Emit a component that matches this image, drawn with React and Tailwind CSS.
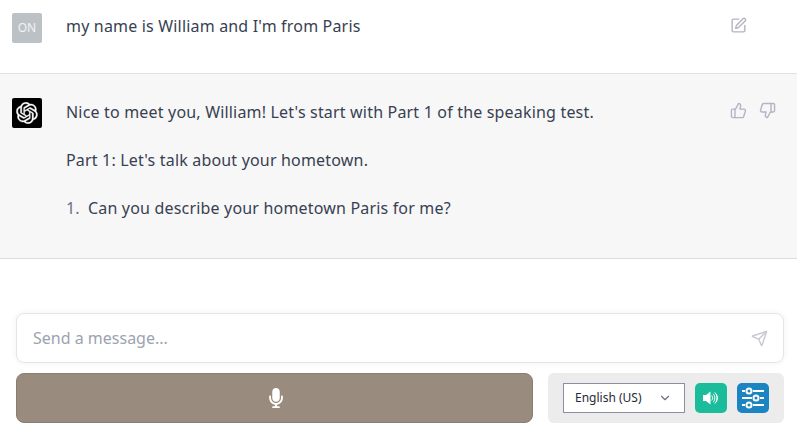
import React from 'react';
import { SquarePen, ThumbsUp, ThumbsDown, Send, ChevronDown } from 'lucide-react';
import { FaMicrophone } from 'react-icons/fa';

const OpenAILogo = () => (
    <svg className="w-[22px] h-[22px]" viewBox="0 0 41 41" fill="none">
        <path
            fill="currentColor"
            stroke="currentColor"
            strokeWidth="0.7"
            d="M37.5324 16.8707C37.9808 15.5241 38.1363 14.0974 37.9886 12.6859C37.8409 11.2744 37.3934 9.91076 36.676 8.68622C35.6126 6.83404 33.9882 5.3676 32.0373 4.4985C30.0864 3.62941 27.9098 3.40259 25.8215 3.85078C24.8796 2.7893 23.7219 1.94125 22.4257 1.36341C21.1295 0.785575 19.7249 0.491269 18.3058 0.500197C16.1708 0.495044 14.0893 1.16803 12.3614 2.42214C10.6335 3.67624 9.34853 5.44666 8.6917 7.47815C7.30085 7.76286 5.98686 8.3414 4.8377 9.17505C3.68854 10.0087 2.73073 11.0782 2.02839 12.312C0.956464 14.1591 0.498905 16.2988 0.721698 18.4228C0.944492 20.5467 1.83612 22.5449 3.268 24.1293C2.81966 25.4759 2.66413 26.9026 2.81182 28.3141C2.95951 29.7256 3.40701 31.0892 4.12437 32.3138C5.18791 34.1659 6.8123 35.6322 8.76321 36.5013C10.7141 37.3704 12.8907 37.5973 14.9789 37.1492C15.9208 38.2107 17.0786 39.0587 18.3747 39.6366C19.6709 40.2144 21.0755 40.5087 22.4946 40.4998C24.6307 40.5054 26.7133 39.8321 28.4418 38.5772C30.1704 37.3223 31.4556 35.5506 32.1119 33.5179C33.5027 33.2332 34.8167 32.6547 35.9659 31.821C37.115 30.9874 38.0728 29.9178 38.7752 28.684C39.8458 26.8371 40.3023 24.6979 40.0789 22.5748C39.8556 20.4517 38.9639 18.4544 37.5324 16.8707ZM22.4978 37.8849C20.7443 37.8874 19.0459 37.2733 17.6994 36.1501C17.7601 36.117 17.8666 36.0586 17.936 36.0161L25.9004 31.4156C26.1003 31.3019 26.2663 31.137 26.3813 30.9378C26.4964 30.7386 26.5563 30.5124 26.5549 30.2825V19.0542L29.9213 20.998C29.9389 21.0068 29.9541 21.0198 29.9656 21.0359C29.977 21.052 29.9842 21.0707 29.9867 21.0902V30.3889C29.9842 32.375 29.1946 34.2791 27.7909 35.6841C26.3872 37.0892 24.4838 37.8806 22.4978 37.8849ZM6.39227 31.0064C5.51397 29.4888 5.19742 27.7107 5.49804 25.9832C5.55718 26.0187 5.66048 26.0818 5.73461 26.1244L13.699 30.7248C13.8975 30.8408 14.1233 30.902 14.3532 30.902C14.583 30.902 14.8088 30.8408 15.0073 30.7248L24.731 25.1103V28.9979C24.7321 29.0177 24.7283 29.0376 24.7199 29.0556C24.7115 29.0736 24.6988 29.0893 24.6829 29.1012L16.6317 33.7497C14.9096 34.7416 12.8643 35.0097 10.9447 34.4954C9.02506 33.9811 7.38785 32.7263 6.39227 31.0064ZM4.29707 13.6194C5.17156 12.0998 6.55279 10.9364 8.19885 10.3327C8.19885 10.4013 8.19491 10.5228 8.19491 10.6071V19.808C8.19351 20.0378 8.25334 20.2638 8.36823 20.4629C8.48312 20.6619 8.64893 20.8267 8.84863 20.9404L18.5723 26.5542L15.206 28.4979C15.1894 28.5089 15.1703 28.5155 15.1505 28.5173C15.1307 28.5191 15.1107 28.516 15.0924 28.5082L7.04046 23.8557C5.32135 22.8601 4.06716 21.2235 3.55289 19.3046C3.03862 17.3858 3.30624 15.3413 4.29707 13.6194ZM31.955 20.0556L22.2312 14.4411L25.5976 12.4981C25.6142 12.4872 25.6333 12.4805 25.6531 12.4787C25.6729 12.4769 25.6928 12.4801 25.7111 12.4879L33.7631 17.1364C34.9967 17.849 36.0017 18.8982 36.6606 20.1613C37.3194 21.4244 37.6047 22.849 37.4832 24.2684C37.3617 25.6878 36.8382 27.0432 35.9743 28.1759C35.1103 29.3086 33.9415 30.1717 32.6047 30.6641C32.6047 30.5947 32.6047 30.4733 32.6047 30.3889V21.188C32.6066 20.9586 32.5474 20.7328 32.4332 20.5338C32.319 20.3348 32.154 20.1698 31.955 20.0556ZM35.3055 15.0128C35.2464 14.9765 35.1431 14.9142 35.069 14.8717L27.1045 10.2712C26.906 10.1554 26.6803 10.0943 26.4504 10.0943C26.2206 10.0943 25.9948 10.1554 25.7963 10.2712L16.0726 15.8858V11.9982C16.0715 11.9783 16.0753 11.9585 16.0837 11.9405C16.0921 11.9225 16.1048 11.9068 16.1207 11.8949L24.1719 7.25025C25.4053 6.53903 26.8158 6.19376 28.2383 6.25482C29.6608 6.31589 31.0364 6.78077 32.2044 7.59508C33.3723 8.40939 34.2842 9.53945 34.8334 10.8531C35.3826 12.1667 35.5464 13.6095 35.3055 15.0128ZM14.2424 21.9419L10.8752 19.9981C10.8576 19.9893 10.8423 19.9763 10.8309 19.9602C10.8195 19.9441 10.8122 19.9254 10.8098 19.9058V10.6071C10.8107 9.18295 11.2173 7.78848 11.9819 6.58696C12.7466 5.38544 13.8377 4.42659 15.1275 3.82264C16.4173 3.21869 17.8524 2.99464 19.2649 3.1767C20.6775 3.35876 22.0089 3.93941 23.1034 4.85067C23.0427 4.88379 22.937 4.94215 22.8668 4.98473L14.9024 9.58517C14.7025 9.69878 14.5366 9.86356 14.4215 10.0626C14.3065 10.2616 14.2466 10.4877 14.2479 10.7175L14.2424 21.9419ZM16.071 17.9991L20.4018 15.4978L24.7325 17.9975V22.9985L20.4018 25.4983L16.071 22.9985V17.9991Z"
        />
    </svg>
);

const SpeakerIcon = () => (
    <svg className="w-[18px] h-[18px]" viewBox="0 0 18 18" fill="none">
        <path fill="currentColor" d="M1 6h3l4.500-3.500v13L4 12H1.500a.5.5 0 0 1-.5-.5V6z" />
        <path stroke="currentColor" strokeWidth="0.900" strokeLinecap="round" d="M10 6.800a3.200 3.200 0 0 1 0 4.400" />
        <path stroke="currentColor" strokeWidth="0.900" strokeLinecap="round" d="M11.500 5.200a5.500 5.500 0 0 1 0 7.600" />
        <path stroke="currentColor" strokeWidth="0.900" strokeLinecap="round" d="M13 3.600a7.800 7.800 0 0 1 0 10.800" />
        <path stroke="currentColor" strokeWidth="0.900" strokeLinecap="round" d="M14.600 5.200a7.500 7.500 0 0 1 0 7.600" />
    </svg>
);

const SlidersIcon = () => (
    <svg className="w-[26px] h-[26px]" viewBox="0 0 26 26" fill="none" stroke="currentColor" strokeWidth="2" strokeLinecap="butt">
        <path d="M2 6h3M13 6h11" />
        <circle cx="9" cy="6" r="2.500" />
        <path d="M2 13h10M20 13h4" />
        <circle cx="16" cy="13" r="2.500" />
        <path d="M2 20h3M13 20h11" />
        <circle cx="9" cy="20" r="2.500" />
    </svg>
);

export default function App() {
    return (
        <div className="h-[429px] overflow-hidden bg-white text-[16px] leading-[28px] tracking-[0.18px] text-[#374151] font-['Noto_Sans','Open_Sans',sans-serif]">
            {/* User message */}
            <div className="flex pl-3 pr-[50px] pt-[13px] pb-[30px] border-b border-[#e2e2e6]">
                <div className="w-[30px] h-[30px] shrink-0 rounded-[2px] bg-[#bcc1c6] text-white/80 text-[12px] tracking-normal flex items-center justify-center">
                    ON
                </div>
                <p className="ml-6 flex-1 -mt-px">my name is William and I'm from Paris</p>
                <SquarePen className="w-[17px] h-[17px] mt-[4px] text-[#b4b4c4]" />
            </div>

            {/* Assistant message */}
            <div className="flex pl-3 pr-[21px] pt-6 pb-9 bg-[#f7f7f8] border-b border-[#dcdcde]">
                <div className="w-[30px] h-[30px] shrink-0 rounded-[2px] bg-black text-white flex items-center justify-center">
                    <OpenAILogo />
                </div>
                <div className="ml-6 flex-1">
                    <p className="mb-5">Nice to meet you, William! Let's start with Part 1 of the speaking test.</p>
                    <p className="mb-5">Part 1: Let's talk about your hometown.</p>
                    <ol className="flex">
                        <li className="flex">
                            <span className="w-[22px] text-[#6b7280]">1.</span>
                            <span>Can you describe your hometown Paris for me?</span>
                        </li>
                    </ol>
                </div>
                <div className="flex gap-3 mt-[4px] text-[#b4b4c4]">
                    <ThumbsUp className="w-[17px] h-[17px]" />
                    <ThumbsDown className="w-[17px] h-[17px]" />
                </div>
            </div>

            {/* Input area */}
            <div className="pl-4 pr-[13px] pt-[54px] flex flex-col gap-[10px]">
                <div className="h-[50px] flex items-center justify-between pl-[16px] pr-[15px] bg-white border border-[#e5e5e5] rounded-lg shadow-[0_0_6px_rgba(0,0,0,0.06)]">
                    <span className="text-[#9ca3af] tracking-normal">Send a message...</span>
                    <Send className="w-[17px] h-[17px] text-[#c8c8d0]" />
                </div>
                <div className="flex gap-[15px] h-[50px]">
                    <div className="flex-1 flex items-center justify-center pl-[3px] rounded-lg bg-[#998c7e] border border-[#8a7e71] text-white">
                        <FaMicrophone className="w-[16px] h-[20px]" />
                    </div>
                    <div className="w-[236px] flex items-center gap-[10px] pl-[15px] rounded-md bg-[#ececec]">
                        <div className="w-[122px] h-[30px] flex items-center justify-between pl-[11px] pr-[12px] bg-white border border-[#8f8ba3] text-[12px] tracking-normal text-[#1f2937]">
                            <span>English (US)</span>
                            <ChevronDown className="w-[14px] h-[14px] text-[#6b7280]" />
                        </div>
                        <div className="w-8 h-[30px] flex items-center justify-center rounded-[5px] bg-[#1abc9c] text-white">
                            <SpeakerIcon />
                        </div>
                        <div className="w-8 h-[30px] flex items-center justify-center rounded-[5px] bg-[#1c84c0] text-white">
                            <SlidersIcon />
                        </div>
                    </div>
                </div>
            </div>
        </div>
    );
}
